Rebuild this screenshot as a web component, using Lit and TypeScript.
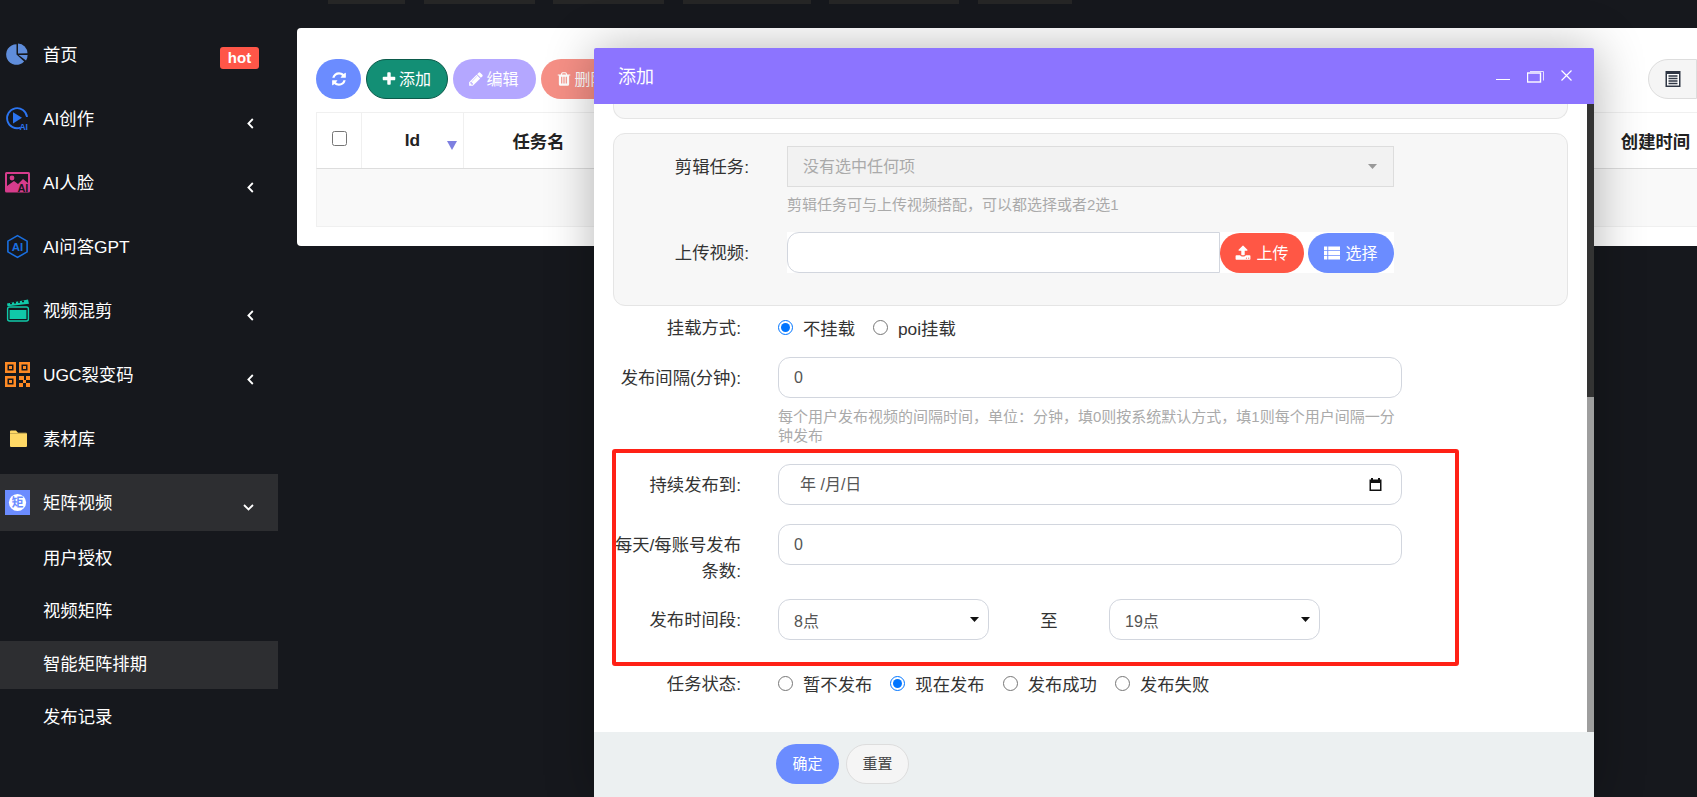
import { LitElement, html, css, svg } from 'lit';
import { customElement } from 'lit/decorators.js';

// font-awesome 4 glyphs, viewBox 0 0 1792 1792
const FA = {
  refresh:
    'M1639 1056q0 5-1 7-64 268-268 434.5t-478 166.5q-146 0-282.5-55t-243.5-157l-129 129q-19 19-45 19t-45-19-19-45v-448q0-26 19-45t45-19h448q26 0 45 19t19 45-19 45l-137 137q71 66 161 102t187 36q134 0 250-65t186-179q11-17 53-117 8-23 30-23h192q13 0 22.5 9.5t9.5 22.5zm25-800v448q0 26-19 45t-45 19h-448q-26 0-45-19t-19-45 19-45l138-138q-148-137-349-137-134 0-250 65t-186 179q-11 17-53 117-8 23-30 23h-199q-13 0-22.5-9.5t-9.5-22.5v-7q65-268 270-434.5t480-166.5q146 0 284 55.5t245 156.5l130-129q19-19 45-19t45 19 19 45z',
  plus:
    'M1600 736v192q0 40-28 68t-68 28h-416v416q0 40-28 68t-68 28h-192q-40 0-68-28t-28-68v-416h-416q-40 0-68-28t-28-68v-192q0-40 28-68t68-28h416v-416q0-40 28-68t68-28h192q40 0 68 28t28 68v416h416q40 0 68 28t28 68z',
  pencil:
    'M491 1536l91-91-235-235-91 91v107h128v128h107zm523-928q0-22-22-22-10 0-17 7l-542 542q-7 7-7 17 0 22 22 22 10 0 17-7l542-542q7-7 7-17zm-54-192l416 416-832 832h-416v-416zm683 96q0 53-37 90l-166 166-416-416 166-165q36-38 90-38 53 0 91 38l235 234q37 39 37 91z',
  trash:
    'M704 1376v-704q0-14-9-23t-23-9h-64q-14 0-23 9t-9 23v704q0 14 9 23t23 9h64q14 0 23-9t9-23zm256 0v-704q0-14-9-23t-23-9h-64q-14 0-23 9t-9 23v704q0 14 9 23t23 9h64q14 0 23-9t9-23zm256 0v-704q0-14-9-23t-23-9h-64q-14 0-23 9t-9 23v704q0 14 9 23t23 9h64q14 0 23-9t9-23zm-544-992h448l-48-117q-7-9-17-11h-317q-10 2-17 11zm928 32v64q0 14-9 23t-23 9h-96v948q0 83-47 143.5t-113 60.5h-832q-66 0-113-58.5t-47-141.5v-952h-96q-14 0-23-9t-9-23v-64q0-14 9-23t23-9h309l70-167q15-37 54-63t79-26h320q40 0 79 26t54 63l70 167h309q14 0 23 9t9 23z',
  upload:
    'M1344 1472q0-26-19-45t-45-19-45 19-19 45 19 45 45 19 45-19 19-45zm256 0q0-26-19-45t-45-19-45 19-19 45 19 45 45 19 45-19 19-45zm128-224v320q0 40-28 68t-68 28h-1472q-40 0-68-28t-28-68v-320q0-40 28-68t68-28h427q21 56 70.5 92t110.5 36h256q61 0 110.5-36t70.5-92h427q40 0 68 28t28 68zm-325-648q-17 40-59 40h-256v448q0 26-19 45t-45 19h-256q-26 0-45-19t-19-45v-448h-256q-42 0-59-40-17-39 14-69l448-448q18-19 45-19t45 19l448 448q31 30 14 69z',
};

const fa = (name: keyof typeof FA) => html`<svg class="fa" viewBox="0 0 1792 1792"><path fill="currentColor" d=${FA[name]}></path></svg>`;

const ICONS = {
  pie: svg`<path fill="#5f8ddb" d="M11.5 2.2a10.3 10.3 0 1 0 7.6 17.2l-7.6-6.8z"/><path fill="#5f8ddb" d="M13 1.4v10l9.5-.2A10 10 0 0 0 13 1.4z"/><path fill="#5f8ddb" d="M13.6 13l7.4 5.4a10 10 0 0 0 1.6-5.4z"/>`,
  play: svg`<path fill="none" stroke="#2b74f0" stroke-width="1.8" d="M15.5 21.6A10 10 0 1 1 22 11"/><path fill="#2b74f0" d="M8 6.2l9 5.6-9 5.6z"/><text x="14.4" y="23.6" font-size="8.5" font-weight="700" fill="#2b74f0">AI</text>`,
  face: svg`<rect x="0" y="2" width="25" height="20.5" rx="1.5" fill="#d63c8c"/><rect x="2" y="4" width="21" height="12" fill="#16181d"/><circle cx="7" cy="8" r="2.4" fill="#d63c8c"/><path fill="#d63c8c" d="M2 16l7-5 4 3 5-5 5 4v3z"/><text x="12.4" y="22" font-size="11" font-weight="700" fill="#16181d">AI</text>`,
  hex: svg`<path fill="none" stroke="#1a6fe0" stroke-width="1.6" d="M12.5 1.6l9.6 5.5v10.8l-9.6 5.5-9.6-5.5V7.1z"/><text x="12.5" y="17" font-size="11.5" font-weight="700" fill="#1a6fe0" text-anchor="middle">AI</text>`,
  clap: svg`<path fill="#10c9a9" d="M2 5.6L23 1.5l1 4.2-21.5 2.6z"/><g fill="#16181d"><rect x="5" y="4.6" width="2" height="1.6"/><rect x="9" y="3.9" width="2" height="1.6"/><rect x="13" y="3.2" width="2" height="1.6"/><rect x="17" y="2.6" width="2" height="1.6"/></g><rect x="2.6" y="9" width="20.8" height="14" rx="2" fill="none" stroke="#10c9a9" stroke-width="1.4"/><rect x="4.6" y="12" width="16.8" height="9" fill="#10c9a9"/>`,
  qr: svg`<g fill="#ff8a24"><path fill-rule="evenodd" d="M0 0h11v11H0zM2.5 2.5v6h6v-6z"/><rect x="4" y="4" width="3" height="3"/><path fill-rule="evenodd" d="M14 0h11v11H14zM16.5 2.5v6h6v-6z"/><rect x="18" y="4" width="3" height="3"/><path fill-rule="evenodd" d="M0 14h11v11H0zM2.5 16.5v6h6v-6z"/><rect x="4" y="18" width="3" height="3"/><rect x="14" y="14" width="5" height="4"/><rect x="21" y="14" width="4" height="4"/><rect x="18" y="18" width="3" height="3"/><rect x="14" y="21" width="4" height="4"/><rect x="21" y="21" width="4" height="4"/></g>`,
  folder: svg`<path fill="#ffd966" d="M6 4.5h5l2 2.2h8a1 1 0 0 1 1 1V20a1 1 0 0 1-1 1H6a1 1 0 0 1-1-1V5.5a1 1 0 0 1 1-1z"/><path fill="#9a8440" d="M5 7h17v1H5z" opacity=".5"/>`,
  matrix: svg`<rect width="25" height="25" fill="#6b8cff"/><circle cx="12.5" cy="12.5" r="8.6" fill="#fff"/><text x="12.5" y="17" font-size="12" font-weight="700" fill="#6b8cff" text-anchor="middle">矩</text>`,
};

type MenuItem = { icon: keyof typeof ICONS; label: string; arrow?: boolean; hot?: boolean };

const MENU: MenuItem[] = [
  { icon: 'pie', label: '首页', hot: true },
  { icon: 'play', label: 'AI创作', arrow: true },
  { icon: 'face', label: 'AI人脸', arrow: true },
  { icon: 'hex', label: 'AI问答GPT' },
  { icon: 'clap', label: '视频混剪', arrow: true },
  { icon: 'qr', label: 'UGC裂变码', arrow: true },
  { icon: 'folder', label: '素材库' },
];

const SUBMENU = ['用户授权', '视频矩阵', '智能矩阵排期', '发布记录'];
const TOP_TABS = [77, 111, 111, 128, 130, 94];

@customElement('app-root')
export class AppRoot extends LitElement {
  static styles = css`
    :host {
      display: block;
      position: relative;
      width: 1697px;
      height: 797px;
      overflow: hidden;
      background: #16181d;
      font-family: 'Liberation Sans', 'Noto Sans CJK SC', sans-serif;
      font-size: 17.33px;
      color: #333;
    }
    .fa { width: 16px; height: 16px; flex: none; }
    .layout { display: flex; height: 100%; }

    /* sidebar */
    .sidebar { width: 278px; flex: none; padding-top: 22px; color: #fff; box-sizing: border-box; }
    .item { display: flex; align-items: center; height: 64px; padding: 0 19px 0 5px; }
    .item svg.ico { width: 25px; height: 25px; flex: none; margin-right: 13px; }
    .item .name { margin-bottom: 2px; }
    .hot {
      margin-left: auto;
      margin-top: 8px;
      width: 39px;
      height: 22px;
      line-height: 22px;
      text-align: center;
      background: #ff5648;
      border-radius: 3px;
      font-size: 15px;
      font-weight: 700;
    }
    .chev { margin-left: auto; margin-right: 5px; margin-top: 10px; width: 7px; height: 11px; flex: none; }
    .item.open { height: 57px; margin-top: 4px; background: #2d2e31; }
    .item.open .down { margin-left: auto; margin-right: 5px; margin-top: 10px; width: 11px; height: 7px; flex: none; }
    .sub { display: flex; flex-direction: column; gap: 5px; padding-top: 4px; }
    .sub div { height: 48px; line-height: 47px; padding-left: 43px; }
    .sub .on { background: #2d2e31; }

    /* page behind the dialog */
    .main { flex: 1; min-width: 0; }
    .tabs { display: flex; gap: 18.5px; height: 4px; padding-left: 50px; position: relative; }
    .tabs i { display: block; height: 4px; background: #262626; }
    .card {
      margin: 24px 0 0 19px;
      height: 218px;
      box-sizing: border-box;
      padding-top: 31px;
      padding-left: 19px;
      background: #fff;
      border-radius: 4px 0 0 4px;
    }
    .toolbar { display: flex; gap: 5px; height: 40px; }
    .tb {
      display: flex;
      align-items: center;
      justify-content: center;
      gap: 2px;
      height: 40px;
      box-sizing: border-box;
      border-radius: 20px;
      color: #fff;
      font-size: 16px;
    }
    .tb span { margin: 0 2px 2px 0; }
    .tb.refresh { width: 45px; background: #6b8cff; }
    .tb.add { width: 82px; background: #138f75; border: 1px solid #0b5a4a; }
    .tb.edit { width: 83px; background: #b4a7ff; }
    .tb.del { width: 83px; background: #f69086; }
    .tb.columns {
      margin-left: auto;
      width: 49px;
      background: #f5f5f5;
      border: 1px solid #ddd;
      border-radius: 20px 0 0 20px;
    }
    .table { margin-top: 13px; }
    .thead { display: flex; height: 57px; box-sizing: border-box; border: 1px solid #f0f0f0; border-bottom: 1px solid #ddd; border-right: 0; font-weight: 700; color: #222; }
    .thead > div { display: flex; align-items: center; justify-content: center; border-right: 1px solid #f0f0f0; box-sizing: border-box; position: relative; }
    .c-check { width: 45px; }
    .c-check input { width: 15px; height: 15px; margin: 0 0 5px; }
    .c-id { width: 102px; }
    .c-name { width: 150px; }
    .thead .c-fill { flex: 1; border-right: 0; }
    .thead .c-time { width: 83px; border-right: 0; }
    .sort { position: absolute; right: 6px; top: 28px; width: 10px; height: 9px; }
    .tbody { height: 58px; background: #f9f9f9; border: 1px solid #f0f0f0; border-top: 0; border-right: 0; box-sizing: border-box; }

    /* dialog */
    .modal {
      position: absolute;
      left: 594px;
      top: 48px;
      width: 1000px;
      height: 749px;
      display: flex;
      flex-direction: column;
      background: #fff;
      border-radius: 2px 2px 0 0;
      box-shadow: 1px 1px 50px rgba(0, 0, 0, 0.3);
    }
    .m-head {
      display: flex;
      align-items: center;
      height: 56px;
      flex: none;
      padding: 0 22px 0 24px;
      background: #8c74ff;
      color: #fff;
      font-size: 18px;
      border-radius: 2px 2px 0 0;
    }
    .m-head > span { margin-bottom: 2px; }
    .m-tools { margin-left: auto; display: flex; gap: 17px; }
    .m-tools svg { height: 16px; display: block; }
    .m-body { flex: 1; display: flex; min-height: 0; }
    .m-content { flex: 1; min-width: 0; padding: 0 19px; }
    .scrollbar { width: 7px; flex: none; background: #9e9e9e; }
    .scrollbar div { height: 293px; background: #333; }
    .m-foot { height: 65px; flex: none; box-sizing: border-box; padding: 12px 0 0 182px; background: #ecf0f1; display: flex; gap: 7px; }
    .btn { width: 63px; height: 40px; line-height: 40px; box-sizing: border-box; text-align: center; border-radius: 20px; font-size: 15px; }
    .btn.ok { background: #6b8cff; color: #fff; }
    .btn.reset { background: #f5f5f5; border: 1px solid #ddd; line-height: 38px; color: #444; }

    .panel { background: #f7f7f7; border: 1px solid #e5e5e5; }
    .panel.stub { height: 15px; box-sizing: border-box; border-top: 0; border-radius: 0 0 12px 12px; }
    .panel.upload { margin-top: 14px; height: 173px; box-sizing: border-box; padding-top: 12px; border-radius: 12px; }

    .row { display: flex; margin-top: 19px; }
    .row.tight { margin-top: 15px; }
    .row.after-mount { margin-top: 16px; }
    .row.status { margin-top: 31px; }
    .row.mount { margin-top: 9px; }
    .row label.lab {
      width: 128px;
      flex: none;
      margin-right: 37px;
      text-align: right;
      line-height: 26px;
      padding-top: 8px;
      box-sizing: border-box;
      color: #333;
    }
    .row.radio label.lab { padding-top: 0; }
    .row.flat { margin-top: 0; }
    .panel .row label.lab { width: 135px; margin-right: 38px; }
    .panel .row.second { margin-top: 18px; }
    .ctrl { width: 624px; flex: none; }
    .panel .ctrl { width: 607px; }

    .control {
      display: flex;
      align-items: center;
      width: 100%;
      height: 41px;
      box-sizing: border-box;
      padding: 0 15px;
      background: #fff;
      border: 1px solid #d2d6de;
      border-radius: 12px;
      font: inherit;
      font-size: 16px;
      color: #555;
      outline: none;
    }
    .control.picker { padding-left: 21px; padding-right: 18px; justify-content: space-between; }
    .control.picker span { margin-bottom: 3px; }
    .control.hour { width: 211px; padding-right: 9px; justify-content: space-between; }
    .caret { width: 9px; height: 5px; flex: none; }
    .disabled {
      display: flex;
      align-items: center;
      justify-content: space-between;
      height: 41px;
      box-sizing: border-box;
      padding: 0 16px 0 15px;
      background: #f2f2f2;
      border: 1px solid #ddd;
      font-size: 16px;
      color: #aaa;
    }
    .disabled span { margin-bottom: 3px; }
    .help { margin-top: 8px; font-size: 15px; line-height: 19px; color: #aaa; }
    .help.wide { margin-top: 9px; }
    .group { display: flex; height: 41px; background: #fff; }
    .group .control { flex: 1; border-radius: 12px 0 0 12px; width: auto; min-width: 0; }
    .gbtn {
      display: flex;
      align-items: center;
      justify-content: center;
      gap: 5px;
      height: 40px;
      margin: 0.5px 0;
      border-radius: 20px;
      color: #fff;
      font-size: 16px;
      flex: none;
    }
    .gbtn span { margin-bottom: 2px; }
    .gbtn.up { width: 84px; background: #ff5745; margin-right: 4px; }
    .gbtn.pick { width: 86px; background: #6b8cff; }
    .radios { display: flex; align-items: center; height: 26px; gap: 18px; margin-top: -1px; color: #333; }
    .radios span { display: flex; align-items: center; gap: 10px; }
    .radios input { width: 15px; height: 15px; margin: 0; flex: none; }
    .range { display: flex; align-items: center; }
    .range b { width: 120px; text-align: center; font-weight: 400; color: #333; }
    .note {
      position: absolute;
      left: 18px;
      top: 401px;
      width: 847px;
      height: 217px;
      box-sizing: border-box;
      border: 4px solid #ff2116;
      border-radius: 3px;
      pointer-events: none;
    }
  `;

  private renderMenu() {
    return MENU.map(
      (m) => html`<div class="item">
        <svg class="ico" viewBox="0 0 25 25" font-family="Liberation Sans">${ICONS[m.icon]}</svg>
        <span class="name">${m.label}</span>
        ${m.hot ? html`<span class="hot">hot</span>` : ''}
        ${m.arrow
          ? html`<svg class="chev" viewBox="0 0 7 11"><path d="M5.8 1L1.4 5.5l4.4 4.5" fill="none" stroke="#fff" stroke-width="1.8"></path></svg>`
          : ''}
      </div>`
    );
  }

  private renderCaret() {
    return html`<svg class="caret" viewBox="0 0 9 5"><path d="M0 0h9L4.5 5z" fill="#111"></path></svg>`;
  }

  render() {
    return html`
      <div class="layout">
        <aside class="sidebar">
          ${this.renderMenu()}
          <div class="item open">
            <svg class="ico" viewBox="0 0 25 25" font-family="Liberation Sans, Noto Sans CJK SC">${ICONS.matrix}</svg>
            <span class="name">矩阵视频</span>
            <svg class="down" viewBox="0 0 11 7"><path d="M1 1l4.5 4.4L10 1" fill="none" stroke="#fff" stroke-width="1.8"></path></svg>
          </div>
          <div class="sub">
            ${SUBMENU.map((s, i) => html`<div class=${i === 2 ? 'on' : ''}>${s}</div>`)}
          </div>
        </aside>

        <main class="main">
          <div class="tabs">${TOP_TABS.map((w) => html`<i style="width:${w}px"></i>`)}</div>
          <section class="card">
            <div class="toolbar">
              <div class="tb refresh">${fa('refresh')}</div>
              <div class="tb add">${fa('plus')}<span>添加</span></div>
              <div class="tb edit">${fa('pencil')}<span>编辑</span></div>
              <div class="tb del">${fa('trash')}<span>删除</span></div>
              <div class="tb columns">
                <svg class="fa" viewBox="0 0 16 16">
                  <rect x="0.5" y="0" width="15" height="16" fill="#2f3644"></rect>
                  <rect x="2" y="3" width="12" height="11.5" fill="#fff"></rect>
                  <path d="M3.5 5h9M3.5 7.5h9M3.5 10h9M3.5 12.5h9" stroke="#2f3644" stroke-width="1.3"></path>
                </svg>
              </div>
            </div>
            <div class="table">
              <div class="thead">
                <div class="c-check"><input type="checkbox" /></div>
                <div class="c-id">
                  Id
                  <svg class="sort" viewBox="0 0 10 9"><path d="M0 0h10L5 9z" fill="#7d7fe0"></path></svg>
                </div>
                <div class="c-name">任务名</div>
                <div class="c-fill"></div>
                <div class="c-time">创建时间</div>
              </div>
              <div class="tbody"></div>
            </div>
          </section>
        </main>
      </div>

      <div class="modal">
        <header class="m-head">
          <span>添加</span>
          <div class="m-tools">
            <svg width="14" viewBox="0 0 14 16"><path d="M0 11.5h14" stroke="#fff" stroke-width="1"></path></svg>
            <svg width="17" viewBox="0 0 17 16">
              <path d="M3 3.5h13.5v9" fill="none" stroke="#e6e0ff" stroke-width="1"></path>
              <rect x="0.5" y="5" width="13" height="9" fill="none" stroke="#fff" stroke-width="1.4"></rect>
            </svg>
            <svg width="11" viewBox="0 0 11 16"><path d="M0.5 2.5l10 10M10.5 2.5l-10 10" stroke="#fff" stroke-width="1.2"></path></svg>
          </div>
        </header>

        <div class="m-body">
          <div class="m-content">
            <div class="panel stub"></div>
            <div class="panel upload">
              <div class="row flat">
                <label class="lab">剪辑任务:</label>
                <div class="ctrl">
                  <div class="disabled">
                    <span>没有选中任何项</span>
                    <svg class="caret" viewBox="0 0 9 5"><path d="M0 0h9L4.5 5z" fill="#999"></path></svg>
                  </div>
                  <div class="help">剪辑任务可与上传视频搭配，可以都选择或者2选1</div>
                </div>
              </div>
              <div class="row second">
                <label class="lab">上传视频:</label>
                <div class="ctrl group">
                  <input class="control" />
                  <div class="gbtn up">${fa('upload')}<span>上传</span></div>
                  <div class="gbtn pick">
                    <svg class="fa" width="17" viewBox="0 0 17 14">
                      <path d="M0 0h3.5v4H0zM4.5 0H17v4H4.5zM0 5h3.5v4H0zM4.5 5H17v4H4.5zM0 10h3.5v4H0zM4.5 10H17v4H4.5z" fill="currentColor"></path>
                    </svg>
                    <span>选择</span>
                  </div>
                </div>
              </div>
            </div>

            <div class="row radio mount">
              <label class="lab">挂载方式:</label>
              <div class="radios">
                <span><input type="radio" name="mount" checked />不挂载</span>
                <span><input type="radio" name="mount" />poi挂载</span>
              </div>
            </div>

            <div class="row after-mount">
              <label class="lab">发布间隔(分钟):</label>
              <div class="ctrl">
                <input class="control" value="0" />
                <div class="help wide">每个用户发布视频的间隔时间，单位：分钟，填0则按系统默认方式，填1则每个用户间隔一分钟发布</div>
              </div>
            </div>

            <div class="row">
              <label class="lab">持续发布到:</label>
              <div class="ctrl">
                <div class="control picker">
                  <span>年 /月/日</span>
                  <svg width="15" height="15" viewBox="0 0 15 15">
                    <path d="M3 1h2v1.5h5V1h2v1.5h1.5V14h-12V2.5H3zM3 6v6.5h9V6z" fill="#111"></path>
                  </svg>
                </div>
              </div>
            </div>

            <div class="row">
              <label class="lab">每天/每账号发布条数:</label>
              <div class="ctrl"><input class="control" value="0" /></div>
            </div>

            <div class="row tight">
              <label class="lab">发布时间段:</label>
              <div class="range">
                <div class="control hour"><span>8点</span>${this.renderCaret()}</div>
                <b>至</b>
                <div class="control hour"><span>19点</span>${this.renderCaret()}</div>
              </div>
            </div>

            <div class="row radio status">
              <label class="lab">任务状态:</label>
              <div class="radios">
                <span><input type="radio" name="status" />暂不发布</span>
                <span><input type="radio" name="status" checked />现在发布</span>
                <span><input type="radio" name="status" />发布成功</span>
                <span><input type="radio" name="status" />发布失败</span>
              </div>
            </div>
          </div>
          <div class="scrollbar"><div></div></div>
        </div>

        <footer class="m-foot">
          <div class="btn ok">确定</div>
          <div class="btn reset">重置</div>
        </footer>

        <div class="note"></div>
      </div>
    `;
  }
}
